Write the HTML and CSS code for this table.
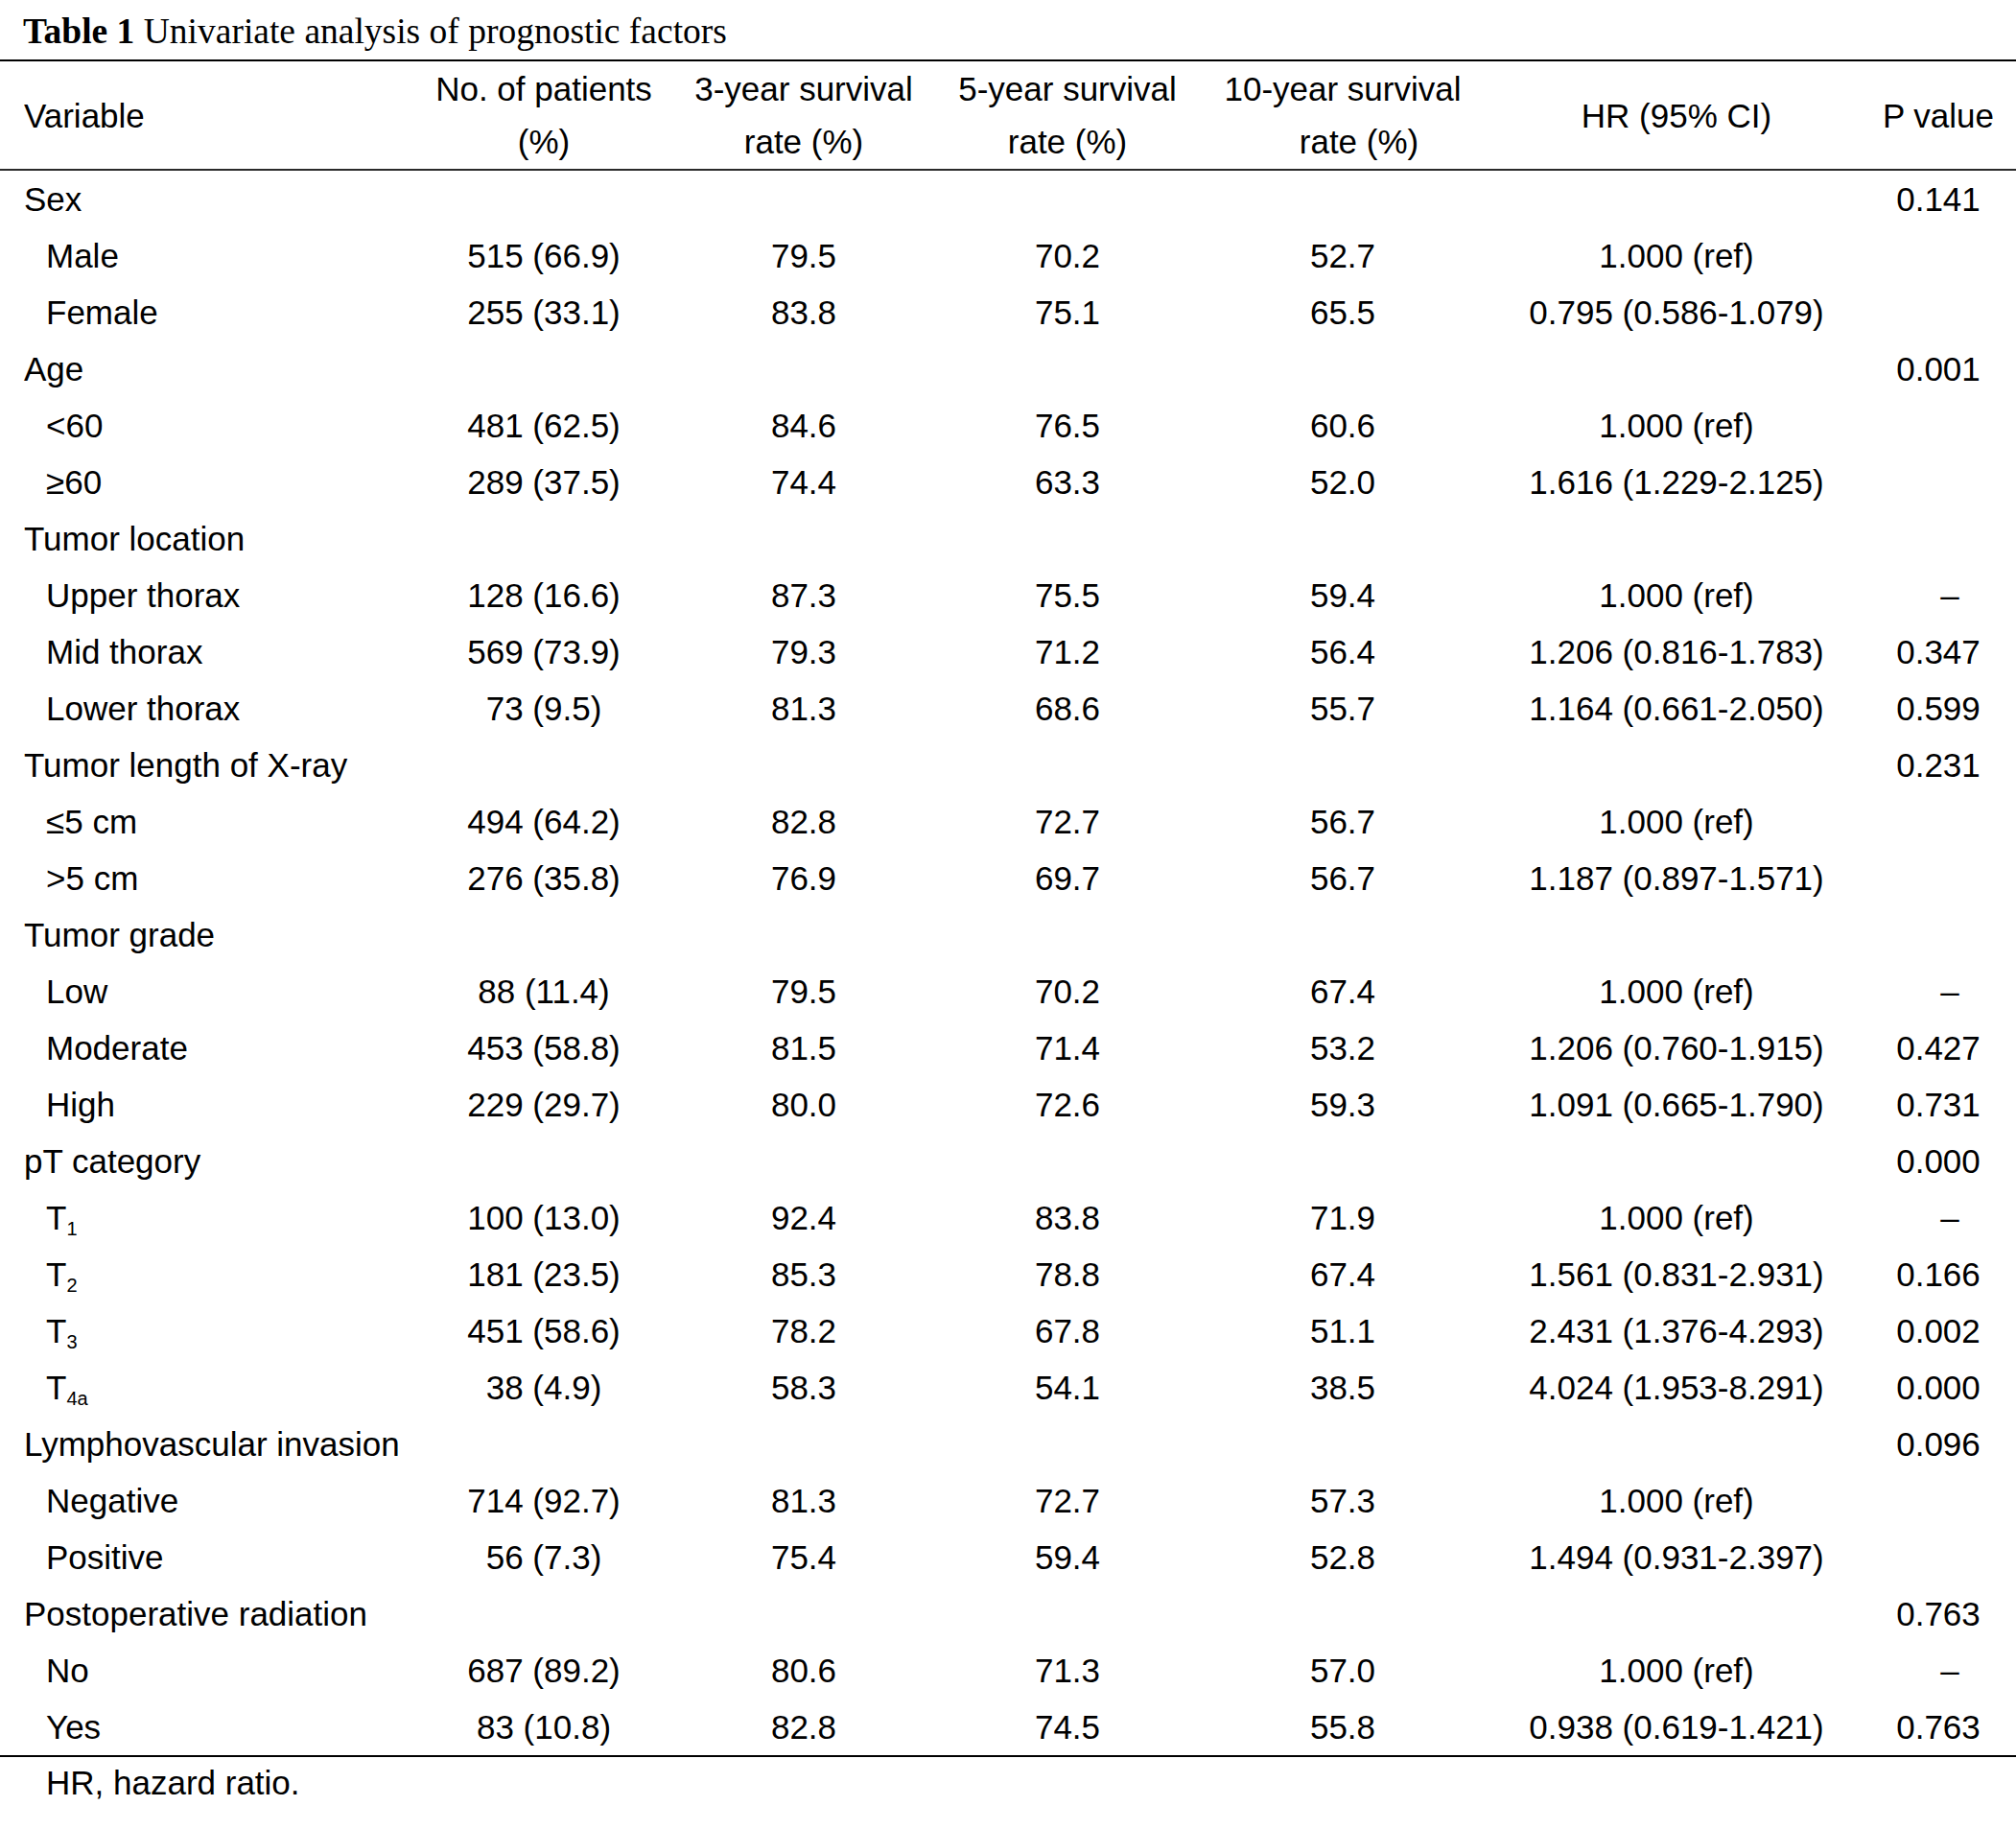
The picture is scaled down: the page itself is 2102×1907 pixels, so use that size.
FILE: index.html
```html
<!DOCTYPE html>
<html lang="en">
<head>
<meta charset="utf-8">
<title>Table 1 Univariate analysis of prognostic factors</title>
<link rel="stylesheet" href="styles.css">
</head>
<body>
<div class="caption"><b>Table 1</b> Univariate analysis of prognostic factors</div>
<table class="tbl">
  <colgroup>
    <col class="c1"><col class="c2"><col class="c3"><col class="c4"><col class="c5"><col class="c6"><col class="c7">
  </colgroup>
  <thead>
    <tr>
      <th class="var">Variable</th>
      <th>No. of patients<br>(%)</th>
      <th>3-year survival<br>rate (%)</th>
      <th>5-year survival<br>rate (%)</th>
      <th>10-year survival<br><span class="shift">rate (%)</span></th>
      <th>HR (95% CI)</th>
      <th>P value</th>
    </tr>
  </thead>
  <tbody>
    <tr><td class="grp">Sex</td><td></td><td></td><td></td><td></td><td></td><td>0.141</td></tr>
    <tr><td class="sub">Male</td><td>515 (66.9)</td><td>79.5</td><td>70.2</td><td>52.7</td><td>1.000 (ref)</td><td></td></tr>
    <tr><td class="sub">Female</td><td>255 (33.1)</td><td>83.8</td><td>75.1</td><td>65.5</td><td>0.795 (0.586-1.079)</td><td></td></tr>
    <tr><td class="grp">Age</td><td></td><td></td><td></td><td></td><td></td><td>0.001</td></tr>
    <tr><td class="sub">&lt;60</td><td>481 (62.5)</td><td>84.6</td><td>76.5</td><td>60.6</td><td>1.000 (ref)</td><td></td></tr>
    <tr><td class="sub">≥60</td><td>289 (37.5)</td><td>74.4</td><td>63.3</td><td>52.0</td><td>1.616 (1.229-2.125)</td><td></td></tr>
    <tr><td class="grp">Tumor location</td><td></td><td></td><td></td><td></td><td></td><td></td></tr>
    <tr><td class="sub">Upper thorax</td><td>128 (16.6)</td><td>87.3</td><td>75.5</td><td>59.4</td><td>1.000 (ref)</td><td class="dash">–</td></tr>
    <tr><td class="sub">Mid thorax</td><td>569 (73.9)</td><td>79.3</td><td>71.2</td><td>56.4</td><td>1.206 (0.816-1.783)</td><td>0.347</td></tr>
    <tr><td class="sub">Lower thorax</td><td>73 (9.5)</td><td>81.3</td><td>68.6</td><td>55.7</td><td>1.164 (0.661-2.050)</td><td>0.599</td></tr>
    <tr><td class="grp">Tumor length of X-ray</td><td></td><td></td><td></td><td></td><td></td><td>0.231</td></tr>
    <tr><td class="sub">≤5 cm</td><td>494 (64.2)</td><td>82.8</td><td>72.7</td><td>56.7</td><td>1.000 (ref)</td><td></td></tr>
    <tr><td class="sub">&gt;5 cm</td><td>276 (35.8)</td><td>76.9</td><td>69.7</td><td>56.7</td><td>1.187 (0.897-1.571)</td><td></td></tr>
    <tr><td class="grp">Tumor grade</td><td></td><td></td><td></td><td></td><td></td><td></td></tr>
    <tr><td class="sub">Low</td><td>88 (11.4)</td><td>79.5</td><td>70.2</td><td>67.4</td><td>1.000 (ref)</td><td class="dash">–</td></tr>
    <tr><td class="sub">Moderate</td><td>453 (58.8)</td><td>81.5</td><td>71.4</td><td>53.2</td><td>1.206 (0.760-1.915)</td><td>0.427</td></tr>
    <tr><td class="sub">High</td><td>229 (29.7)</td><td>80.0</td><td>72.6</td><td>59.3</td><td>1.091 (0.665-1.790)</td><td>0.731</td></tr>
    <tr><td class="grp">pT category</td><td></td><td></td><td></td><td></td><td></td><td>0.000</td></tr>
    <tr><td class="sub">T<sub>1</sub></td><td>100 (13.0)</td><td>92.4</td><td>83.8</td><td>71.9</td><td>1.000 (ref)</td><td class="dash">–</td></tr>
    <tr><td class="sub">T<sub>2</sub></td><td>181 (23.5)</td><td>85.3</td><td>78.8</td><td>67.4</td><td>1.561 (0.831-2.931)</td><td>0.166</td></tr>
    <tr><td class="sub">T<sub>3</sub></td><td>451 (58.6)</td><td>78.2</td><td>67.8</td><td>51.1</td><td>2.431 (1.376-4.293)</td><td>0.002</td></tr>
    <tr><td class="sub">T<sub>4a</sub></td><td>38 (4.9)</td><td>58.3</td><td>54.1</td><td>38.5</td><td>4.024 (1.953-8.291)</td><td>0.000</td></tr>
    <tr><td class="grp">Lymphovascular invasion</td><td></td><td></td><td></td><td></td><td></td><td>0.096</td></tr>
    <tr><td class="sub">Negative</td><td>714 (92.7)</td><td>81.3</td><td>72.7</td><td>57.3</td><td>1.000 (ref)</td><td></td></tr>
    <tr><td class="sub">Positive</td><td>56 (7.3)</td><td>75.4</td><td>59.4</td><td>52.8</td><td>1.494 (0.931-2.397)</td><td></td></tr>
    <tr><td class="grp">Postoperative radiation</td><td></td><td></td><td></td><td></td><td></td><td>0.763</td></tr>
    <tr><td class="sub">No</td><td>687 (89.2)</td><td>80.6</td><td>71.3</td><td>57.0</td><td>1.000 (ref)</td><td class="dash">–</td></tr>
    <tr class="last"><td class="sub">Yes</td><td>83 (10.8)</td><td>82.8</td><td>74.5</td><td>55.8</td><td>0.938 (0.619-1.421)</td><td>0.763</td></tr>
  </tbody>
</table>
<div class="note">HR, hazard ratio.</div>
</body>
</html>
```
FILE: styles.css
```css
html, body {
  margin: 0;
  padding: 0;
  background: #fff;
  color: #000;
}
body {
  width: 2102px;
  font-family: "Liberation Sans", Arial, Helvetica, sans-serif;
  font-size: 35px;
}
.caption {
  font-family: "Liberation Serif", "Times New Roman", serif;
  font-size: 37.5px;
  line-height: 46px;
  padding: 10px 0 6px 24px;
  white-space: nowrap;
}
.caption b {
  font-weight: bold;
}
.tbl {
  width: 2102px;
  table-layout: fixed;
  border-collapse: collapse;
  border-spacing: 0;
}
.c1 { width: 440px; }
.c2 { width: 254px; }
.c3 { width: 288px; }
.c4 { width: 262px; }
.c5 { width: 312px; }
.c6 { width: 384px; }
.c7 { width: 162px; }
.tbl thead tr {
  border-top: 2px solid #000;
  border-bottom: 2px solid #2a2a2a;
}
.tbl th {
  font-weight: normal;
  line-height: 55px;
  padding: 1px 0;
  text-align: center;
  vertical-align: middle;
  white-space: nowrap;
}
.tbl th.var {
  text-align: left;
  padding-left: 25px;
}
.shift {
  padding-left: 34px;
}
.tbl td {
  height: 59px;
  line-height: 59px;
  padding: 0;
  text-align: center;
  white-space: nowrap;
  overflow: visible;
}
.tbl td.grp {
  text-align: left;
  padding-left: 25px;
}
.tbl td.sub {
  text-align: left;
  padding-left: 48px;
}
.tbl td.dash {
  padding-left: 24px;
}
.tbl sub {
  font-size: 20px;
  line-height: 0;
  vertical-align: -6px;
}
.tbl tr.last {
  border-bottom: 2px solid #000;
}
.note {
  line-height: 54px;
  padding-left: 48px;
}
```
